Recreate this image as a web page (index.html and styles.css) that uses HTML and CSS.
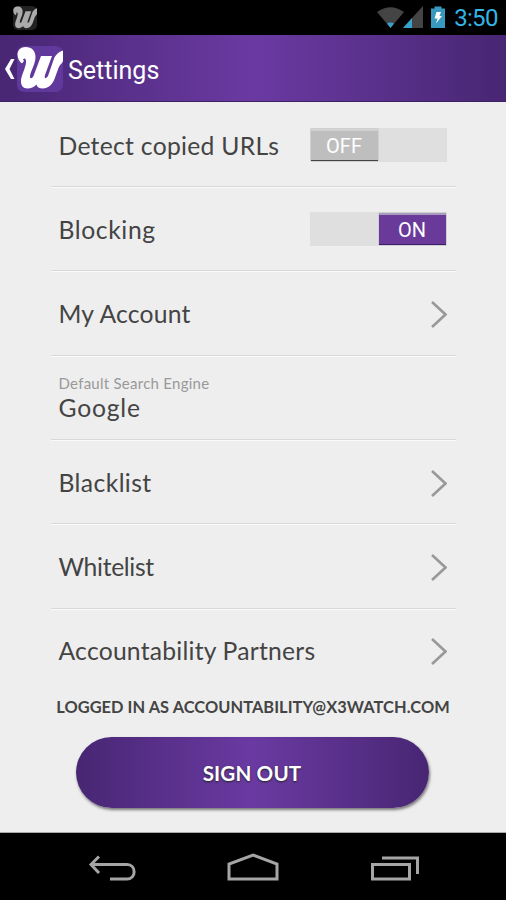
FILE: index.html
```html
<!DOCTYPE html>
<html lang="en">
<head>
<meta charset="utf-8">
<title>Settings</title>
<link rel="stylesheet" href="styles.css">
</head>
<body>
<svg class="defs" aria-hidden="true">
  <symbol id="logo" viewBox="0 0 46 46">
    <path d="M0.500 8.500C0.500 4 4 1 8.500 1C15 1 18.500 5 18.500 11C18.500 18 14 24 13 30C12.500 33 15 33 16.500 30L24 10H35L28 29C27 33 29 33 31 30L36.500 14C38 9.500 41 6 46 4.500V15C45 18 43 18 41.500 22L37.500 33C35 39 31 42.500 26 42.500C22 42.500 20 41 19.500 38.500C17 41 14 42.500 10.500 42.500C6 42.500 3.500 39 4 34C4.500 29 8.500 22 9 16.500C9.500 13 7.500 11.500 6 13.500L7 15L5 17.500C2 15.500 0.500 12 0.500 8.500Z"/>
  </symbol>
  <symbol id="chevron" viewBox="0 0 17 28"><path d="M2 2L15.500 14.500L2 27" fill="none" stroke="#999" stroke-width="2.600"/></symbol>
</svg>
<div class="statusbar">
  <div class="notice"><svg viewBox="0 0 46 46"><use href="#logo"/></svg></div>
  <div class="system">
    <svg class="signals" width="69" height="26" viewBox="0 0 69 26">
      <path d="M1 6Q14.500-3.500 28 6L14.500 22Z" fill="#444"/><path d="M11 17.500Q14.500 15.500 18 17.500L14.500 22Z" fill="#36a2cb"/>
      <path d="M27 22L47 0V22Z" fill="#444"/><path d="M27 22L36 12V22Z" fill="#36a2cb"/>
      <path d="M55 2.500H58.500V0.500H65.500V2.500H69V22H55Z" fill="#3899c0"/><path d="M60.500 6H65L63.500 10H66L60 17.500L61.500 12.500H58.500Z" fill="#fff"/>
    </svg>
    <span class="clock">3:50</span>
  </div>
</div>
<header class="appbar">
  <svg class="back" width="11" height="22" viewBox="0 0 11 22"><path d="M7 1H10.500L5.500 11L10.500 21H7L1 11Z" fill="#fff"/></svg>
  <div class="logo"><svg viewBox="0 0 46 46"><use href="#logo"/></svg></div>
  <h1>Settings</h1>
</header>
<main>
  <ul class="list">
    <li><span class="label urls">Detect copied URLs</span><span class="switch"><b>OFF</b></span></li>
    <li><span class="label blocking">Blocking</span><span class="switch on"><b>ON</b></span></li>
    <li><span class="label account">My Account</span><svg class="chev"><use href="#chevron"/></svg></li>
    <li><div class="pair"><span class="caption">Default Search Engine</span><span class="label google">Google</span></div></li>
    <li><span class="label blacklist">Blacklist</span><svg class="chev"><use href="#chevron"/></svg></li>
    <li><span class="label whitelist">Whitelist</span><svg class="chev"><use href="#chevron"/></svg></li>
    <li><span class="label partners">Accountability Partners</span><svg class="chev"><use href="#chevron"/></svg></li>
  </ul>
  <p class="login">LOGGED IN AS ACCOUNTABILITY@X3WATCH.COM</p>
  <button class="signout">SIGN OUT</button>
</main>
<nav class="navbar">
  <svg width="506" height="67" viewBox="0 0 506 67" fill="none" stroke="#a5a5a5" stroke-width="3">
    <path d="M99 23.500L91 31.500L99 40M91 31.500H127C136.500 31.500 136.500 46 127 46H110"/>
    <path d="M229 46V31L253 22L277 31V46Z"/>
    <path d="M372.500 31.500H409.500V46H372.500ZM382 25H417.500V41"/>
  </svg>
</nav>
</body>
</html>
```
FILE: styles.css
```css
* { box-sizing: border-box; }
body { margin: 0; width: 506px; height: 900px; overflow: hidden; display: flex; flex-direction: column; background: #eee; font-family: Lato, sans-serif; color: #444; }
.defs { display: none; }
.statusbar { height: 35px; flex: none; background: #000; display: flex; justify-content: space-between; padding: 6px 9px 0 13px; }
.notice { width: 24px; height: 24px; background: #222; border-radius: 5px; }
.notice svg { display: block; width: 24px; height: 24px; fill: #aaa; }
.system { display: flex; gap: 9px; }
.clock { font: 24px/25px Roboto, sans-serif; letter-spacing: -0.700px; margin-right: -0.700px; color: #33b5e5; }
.appbar { height: 67px; flex: none; display: flex; align-items: center; padding: 2px 0 0 4px; background: linear-gradient(90deg, #482673, #6a3aa2 50%, #482673); border-bottom: 1px solid #402065; }
.back { margin-right: 2px; }
.logo { width: 46px; height: 46px; background: #61389b; border-radius: 7px; }
.logo svg { display: block; width: 46px; height: 46px; fill: #fff; }
h1 { margin: 4px 0 0 5px; font: 400 25px/30px Roboto, sans-serif; color: #fff; }
main { flex: 1; display: flex; flex-direction: column; align-items: center; border-bottom: 1px solid #aaa; }
.list { list-style: none; margin: 0; padding: 0.600px 0 0; width: 405px; }
.list li { height: 84.350px; display: flex; align-items: center; justify-content: space-between; padding: 1px 9px 0 8px; border-bottom: 1px solid #d8d8d8; box-shadow: 0 1px #fafafa; }
.list li:last-child { border: 0; box-shadow: none; padding-top: 0; height: 83.400px; }
.label { font-size: 24.700px; line-height: 28px; padding-top: 2px; white-space: nowrap; }
.urls { letter-spacing: 0.280px; }
.blocking { letter-spacing: 0.600px; }
.account { letter-spacing: 0.220px; }
.google { letter-spacing: 0.800px; }
.blacklist { letter-spacing: 0.400px; }
.whitelist { letter-spacing: -0.320px; }
.partners { letter-spacing: 0.220px; }
.caption { font-size: 15px; line-height: 18px; letter-spacing: 0.260px; color: #999; }
.pair { display: flex; flex-direction: column; }
.chev { width: 17px; height: 28px; margin-top: 1px; }
.switch { width: 137px; height: 34px; background: #dfdfdf; display: flex; padding: 1px; }
.switch b { width: 67px; height: 32px; background: #bebebe; border-top: 2px solid #d2d2d2; border-bottom: 1px solid #444; color: #fff; font: 400 20px/31px Roboto, sans-serif; text-align: center; box-shadow: 0 0 1px #888; }
.switch.on { justify-content: flex-end; }
.switch.on b { background: #6a3a9b; border-top-color: #a99bbc; border-bottom-color: #3f1c69; }
.login { margin: 3px 0 0; font-size: 16.400px; line-height: 24px; letter-spacing: 0.050px; font-weight: 700; white-space: nowrap; }
.signout { width: 353px; height: 71px; margin: 18px 2px 0 0; border: 0; border-radius: 36px; background: linear-gradient(90deg, #482673, #6a3aa2 50%, #482673); color: #fff; font: 700 20.600px Lato, sans-serif; letter-spacing: 0.150px; text-shadow: 0 1px 2px #222; box-shadow: 1px 2px 3px #777; }
.navbar { height: 67px; flex: none; background: #000; }
.navbar svg { display: block; }
```
